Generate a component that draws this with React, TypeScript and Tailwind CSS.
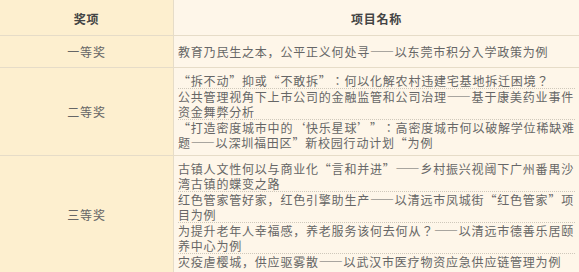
import type { ReactNode } from "react";

const ROWS: { award: string; items: ReactNode[] }[] = [
  {
    award: "一等奖",
    items: ["教育乃民生之本，公平正义何处寻——以东莞市积分入学政策为例"],
  },
  {
    award: "二等奖",
    items: [
      "“拆不动”抑或“不敢拆”：何以化解农村违建宅基地拆迁困境？",
      "公共管理视角下上市公司的金融监管和公司治理——基于康美药业事件资金舞弊分析",
      <>
        “打造密度城市中的‘快乐星球’”：高密度城市何以破解学位稀缺难
        <br />
        题——以深圳福田区”新校园行动计划“为例
      </>,
    ],
  },
  {
    award: "三等奖",
    items: [
      "古镇人文性何以与商业化“言和并进”——乡村振兴视阈下广州番禺沙湾古镇的蝶变之路",
      "红色管家管好家，红色引擎助生产——以清远市凤城街“红色管家”项目为例",
      "为提升老年人幸福感，养老服务该何去何从？——以清远市德善乐居颐养中心为例",
      "灾疫虐樱城，供应驱雾散——以武汉市医疗物资应急供应链管理为例",
    ],
  },
];

export default function App() {
  return (
    <div
      lang="ja"
      className="w-[579px] h-[272px] overflow-hidden bg-[#fef6e9] font-['Noto_Sans_CJK_JP','Noto_Sans_CJK_SC',sans-serif] text-[12px] tracking-[0.8px] text-[#666] [font-feature-settings:'fwid']"
    >
      {/* header */}
      <div className="flex h-[36px] border-b border-[#e6dcc8]">
        <div className="w-[174px] shrink-0 bg-[#fdefcf] border-r border-[#e6dcc8] flex items-center justify-center pt-[2px] font-bold text-[#444]">
          奖项
        </div>
        <div className="flex-1 flex items-center justify-center pt-[2px] font-bold text-[#444]">项目名称</div>
      </div>

      {ROWS.map((row, i) => (
        <div key={row.award} className="flex border-b border-[#e6dcc8]">
          <div className="w-[174px] shrink-0 bg-[#fdefcf] border-r border-[#e6dcc8] flex items-center justify-center">
            {row.award}
          </div>
          <div className={`flex-1 pl-[4px] pr-[4px] ${i === 0 ? "py-[8px]" : "py-[5px]"}`}>
            {row.items.map((t, j) => (
              <div
                key={j}
                className={`leading-[15px] ${j < row.items.length - 1 ? "border-b border-dotted border-[#cfc8bb]" : ""}`}
              >
                {t}
              </div>
            ))}
          </div>
        </div>
      ))}
    </div>
  );
}
